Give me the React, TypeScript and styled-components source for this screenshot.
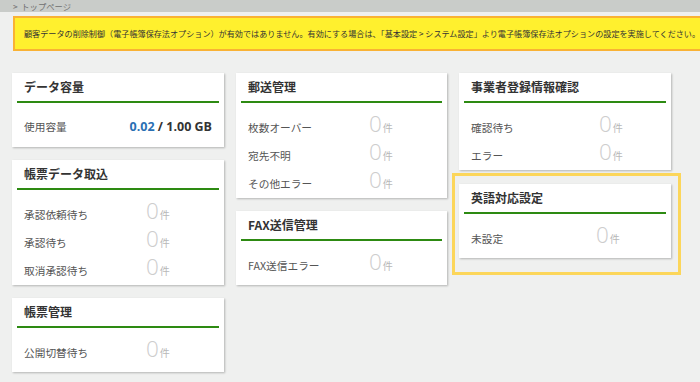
import React from 'react';
import styled, { createGlobalStyle } from 'styled-components';

const GlobalStyle = createGlobalStyle`
  html, body { margin: 0; padding: 0; background: #eff0ef; overflow: hidden; }
  body { font-family: "Noto Sans CJK JP", "Noto Sans", sans-serif; }
  * { box-sizing: border-box; }
`;

const Page = styled.div`
  width: 700px;
  height: 382px;
  overflow: hidden;
  background: #eff0ef;
`;

const Breadcrumb = styled.nav`
  height: 12px;
  background: #c9ccc9;
  color: #6f6f6f;
  font-size: 8.3px;
  line-height: 12px;
  padding-left: 13px;
  white-space: nowrap;
`;

const Notice = styled.div`
  margin: 4px 0 0 13px;
  width: 720px;
  height: 35px;
  background: #fff02e;
  border: 2px solid #f9b234;
  padding-left: 9px;
  display: flex;
  align-items: center;
  font-size: 8.12px;
  color: #333;
  white-space: nowrap;
`;

const Grid = styled.div`
  display: grid;
  grid-template-columns: 212px 211px 212px;
  column-gap: 12px;
  padding: 22px 0 0 12px;
  align-items: start;
`;

const Column = styled.div`
  display: flex;
  flex-direction: column;
  gap: 13px;
`;

const Card = styled.section`
  background: #fff;
  box-shadow: 1px 1px 2px rgba(0, 0, 0, 0.25);
  padding: 0 5px;
  min-height: 74px;
`;

const CardTitle = styled.h2`
  margin: 0;
  height: 30px;
  line-height: 28px;
  padding-left: 7px;
  font-size: 12px;
  font-weight: 700;
  color: #333;
  border-bottom: 2px solid #2d8a12;
`;

const CardBody = styled.div`
  padding: 11px 7px 0;
`;

const Row = styled.div<{ $labelWidth: number; $height?: number }>`
  display: grid;
  grid-template-columns: ${(p) => p.$labelWidth}px auto;
  align-items: start;
  height: ${(p) => p.$height ?? 28}px;
`;

const Label = styled.span<{ $height?: number }>`
  font-size: 10.7px;
  line-height: ${(p) => p.$height ?? 28}px;
  color: #555;
  white-space: nowrap;
`;

const Count = styled.div`
  line-height: 20px;
  white-space: nowrap;
`;

const Zero = styled.span`
  font-family: "Open Sans", "Noto Sans", sans-serif;
  font-weight: 300;
  font-size: 22.5px;
  color: #cdcdcd;
`;

const Unit = styled.span`
  font-size: 10px;
  color: #b8b8b8;
  margin-left: 1px;
`;

const Usage = styled.div`
  justify-self: end;
  font-family: "Open Sans", "Noto Sans", sans-serif;
  font-weight: 700;
  font-size: 12.5px;
  line-height: 25px;
  color: #333;
  white-space: nowrap;
`;

const Used = styled.span`
  color: #2a6fb3;
`;

const Highlight = styled.div`
  margin: -10px -10px 0 -7px;
  border: 3px solid #fcd65a;
  padding: 8px 7px 14px 4px;
`;

function CountCard({ title, items, labelWidth }: { title: string; items: string[]; labelWidth: number }) {
  return (
    <Card>
      <CardTitle>{title}</CardTitle>
      <CardBody>
        {items.map((label) => (
          <Row key={label} $labelWidth={labelWidth}>
            <Label>{label}</Label>
            <Count>
              <Zero>0</Zero>
              <Unit>件</Unit>
            </Count>
          </Row>
        ))}
      </CardBody>
    </Card>
  );
}

export default function App() {
  return (
    <Page>
      <GlobalStyle />
      <Breadcrumb>&gt;&nbsp;&nbsp;トップページ</Breadcrumb>
      <Notice>
        顧客データの削除制御（電子帳簿保存法オプション）が有効ではありません。有効にする場合は、「基本設定 &gt; システム設定」より電子帳簿保存法オプションの設定を実施してください。
      </Notice>
      <Grid>
        <Column>
          <Card>
            <CardTitle>データ容量</CardTitle>
            <CardBody>
              <Row $labelWidth={100} $height={25}>
                <Label $height={25}>使用容量</Label>
                <Usage>
                  <Used>0.02</Used> / 1.00 GB
                </Usage>
              </Row>
            </CardBody>
          </Card>
          <CountCard title="帳票データ取込" items={['承認依頼待ち', '承認待ち', '取消承認待ち']} labelWidth={122} />
          <CountCard title="帳票管理" items={['公開切替待ち']} labelWidth={122} />
        </Column>
        <Column>
          <CountCard title="郵送管理" items={['枚数オーバー', '宛先不明', 'その他エラー']} labelWidth={121} />
          <CountCard title="FAX送信管理" items={['FAX送信エラー']} labelWidth={121} />
        </Column>
        <Column>
          <CountCard title="事業者登録情報確認" items={['確認待ち', 'エラー']} labelWidth={128} />
          <Highlight>
            <CountCard title="英語対応設定" items={['未設定']} labelWidth={125} />
          </Highlight>
        </Column>
      </Grid>
    </Page>
  );
}
